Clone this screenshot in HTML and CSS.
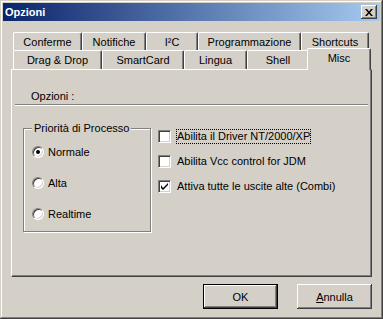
FILE: index.html
```html
<!DOCTYPE html>
<html lang="it">
<head>
  <meta charset="UTF-8">
  <title>Opzioni</title>
  <link rel="stylesheet" href="styles.css">
</head>
<body>
  <div class="window">
    <div class="titlebar">
      <span class="title">Opzioni</span>
      <button type="button" class="close">
        <svg width="8" height="7" viewBox="0 0 8 7"><path d="M0 0h2l2 2.5L6 0h2L5 3.5 8 7H6L4 4.5 2 7H0l3-3.5z" fill="#000"/></svg>
      </button>
    </div>

    <div class="dialog-body">
      <div class="tab-row back">
        <div class="tab w-conferme">Conferme</div>
        <div class="tab w-notifiche">Notifiche</div>
        <div class="tab w-i2c">I²C</div>
        <div class="tab w-prog">Programmazione</div>
        <div class="tab w-shortcuts">Shortcuts</div>
      </div>
      <div class="tab-row front">
        <div class="tab w-drag">Drag &amp; Drop</div>
        <div class="tab w-smart">SmartCard</div>
        <div class="tab w-lingua">Lingua</div>
        <div class="tab w-shell">Shell</div>
        <div class="tab selected w-misc">Misc</div>
      </div>

      <div class="panel">
        <div class="panel-header">Opzioni :</div>

        <div class="panel-content">
          <div class="group">
            <span class="legend">Priorità di Processo</span>
            <label class="radio-row"><span class="radio checked"></span>Normale</label>
            <label class="radio-row"><span class="radio"></span>Alta</label>
            <label class="radio-row"><span class="radio"></span>Realtime</label>
          </div>

          <div class="checks">
            <label class="check-row"><span class="checkbox"></span><span class="check-label focus">Abilita il Driver NT/2000/XP</span></label>
            <label class="check-row"><span class="checkbox"></span><span class="check-label">Abilita Vcc control for JDM</span></label>
            <label class="check-row"><span class="checkbox">
              <svg width="7" height="7" viewBox="0 0 7 7"><path d="M0 2v3l2 2 5-5V-0L2 5z" fill="#000"/></svg>
            </span><span class="check-label">Attiva tutte le uscite alte (Combi)</span></label>
          </div>
        </div>
      </div>

      <div class="buttons">
        <button type="button" class="btn default">OK</button>
        <button type="button" class="btn"><u>A</u>nnulla</button>
      </div>
    </div>
  </div>
</body>
</html>
```

FILE: styles.css
```css
html, body {
  margin: 0;
  padding: 0;
  background: #d4d0c8;
}
body {
  font-family: "Liberation Sans", Arial, sans-serif;
  font-size: 11px;
  color: #000;
}
.window {
  box-sizing: border-box;
  width: 383px;
  height: 319px;
  padding: 3px;
  background: #d4d0c8;
  box-shadow: inset -1px -1px #404040, inset 1px 1px #d4d0c8,
              inset -2px -2px #808080, inset 2px 2px #fff;
}
.titlebar {
  display: flex;
  align-items: center;
  justify-content: space-between;
  height: 18px;
  padding-left: 2px;
  background: linear-gradient(to right, #0a246a, #a6caf0);
}
.title {
  color: #fff;
  font-weight: bold;
  font-size: 11px;
}
.close {
  width: 16px;
  height: 14px;
  margin-right: 3px;
  padding: 0;
  border: none;
  background: #d4d0c8;
  display: flex;
  align-items: center;
  justify-content: center;
  box-shadow: inset -1px -1px #404040, inset 1px 1px #fff,
              inset -2px -2px #808080;
}
.close svg { display: block; }

.dialog-body {
  padding: 0 8px;
}

/* tabs */
.tab-row {
  display: flex;
  padding-left: 2px;
}
.tab-row.back {
  margin-top: 11px;
  height: 18px;
}
.tab-row.front {
  height: 19px;
  align-items: flex-end;
}
.tab {
  box-sizing: border-box;
  text-align: center;
  background: #d4d0c8;
  border-top: 1px solid #fff;
  border-left: 1px solid #fff;
  border-right: 1px solid #404040;
  border-radius: 2px 2px 0 0;
  box-shadow: inset -1px 0 #808080;
  padding-top: 1px;
  line-height: 16px;
  height: 18px;
}
.front .tab {
  height: 19px;
  padding-top: 0;
  line-height: 18px;
}
.front .tab.selected {
  position: relative;
  z-index: 1;
  height: 22px;
  line-height: 18px;
  margin: 0 -2px -1px -2px;
}
.w-conferme { width: 69px; }
.w-notifiche { width: 64px; }
.w-i2c { width: 52px; }
.w-prog { width: 103px; }
.w-shortcuts { width: 68px; }
.w-drag { width: 89px; }
.w-smart { width: 82px; }
.w-lingua { width: 63px; }
.w-shell { width: 62px; }
.w-misc { width: 64px; }

/* panel */
.panel {
  box-sizing: border-box;
  height: 208px;
  border-top: 1px solid #fff;
  border-left: 1px solid #fff;
  border-right: 1px solid #404040;
  border-bottom: 1px solid #404040;
  box-shadow: inset -1px -1px #808080;
}
.panel-header {
  margin: 0 3px;
  padding: 19px 0 1px 16px;
  line-height: 14px;
  border-bottom: 1px solid #808080;
  box-shadow: 0 1px #fff;
}
.panel-content {
  display: flex;
  align-items: flex-start;
  padding-left: 11px;
  margin-top: 23px;
}
.group {
  position: relative;
  box-sizing: border-box;
  width: 128px;
  height: 104px;
  padding-top: 7px;
  border: 1px solid #808080;
  box-shadow: 1px 1px #fff, inset 1px 1px #fff;
}
.legend {
  position: absolute;
  top: -7px;
  left: 8px;
  padding: 0 2px;
  line-height: 13px;
  background: #d4d0c8;
}
.radio-row {
  display: flex;
  align-items: center;
  height: 31px;
  padding-left: 8px;
}
.radio {
  box-sizing: border-box;
  width: 12px;
  height: 12px;
  margin-right: 4px;
  border-radius: 50%;
  background: #fff;
  border: 1px solid;
  border-color: #808080 #fff #fff #808080;
  box-shadow: inset 1px 1px #404040, inset -1px -1px #d4d0c8;
  display: flex;
  align-items: center;
  justify-content: center;
}
.radio.checked::after {
  content: "";
  width: 4px;
  height: 4px;
  border-radius: 50%;
  background: #000;
}

.checks {
  display: flex;
  flex-direction: column;
  gap: 12px;
  margin: 2px 0 0 7px;
}
.check-row {
  display: flex;
  align-items: center;
  height: 13px;
}
.checkbox {
  box-sizing: border-box;
  width: 13px;
  height: 13px;
  margin-right: 5px;
  background: #fff;
  border: 1px solid;
  border-color: #808080 #fff #fff #808080;
  box-shadow: inset 1px 1px #404040, inset -1px -1px #d4d0c8;
  display: flex;
  align-items: center;
  justify-content: center;
}
.checkbox svg { display: block; }
.check-label {
  padding: 1px;
  line-height: 13px;
}
.check-label.focus {
  outline: 1px dotted #000;
  outline-offset: -1px;
}

/* buttons */
.buttons {
  display: flex;
  justify-content: flex-end;
  gap: 19px;
  margin-top: 7px;
}
.btn {
  box-sizing: border-box;
  width: 75px;
  height: 25px;
  padding: 0;
  border: none;
  background: #d4d0c8;
  font-family: "Liberation Sans", Arial, sans-serif;
  font-size: 11px;
  color: #000;
  box-shadow: inset -1px -1px #404040, inset 1px 1px #fff,
              inset -2px -2px #808080;
}
.btn.default {
  border: 1px solid #000;
}
```
